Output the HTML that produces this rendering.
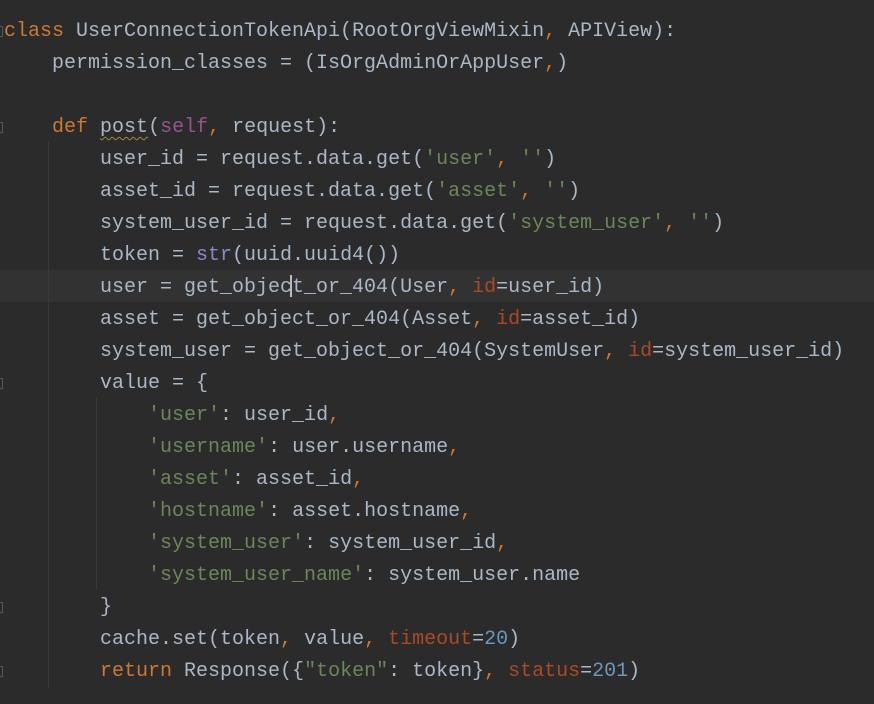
<!DOCTYPE html>
<html><head><style>
html,body{margin:0;padding:0;background:#2b2b2b;width:874px;height:704px;overflow:hidden}
.code{position:absolute;left:4px;top:16px;font-family:"Liberation Mono",monospace;font-size:20px;line-height:32px;color:#a9b7c6;white-space:pre}
.k{color:#cc7832}.s{color:#6a8759}.f{color:#94558d}.p{color:#aa4926}.n{color:#6897bb}.b{color:#8888c6}
.cur{position:absolute;left:0;top:270px;width:874px;height:32px;background:#323232}
.g{position:absolute;width:1px;background:#393939}
.fold{position:absolute;left:0;width:2px;height:9px;border:1px solid #555;border-left:none}
.caret{position:absolute;left:290px;top:275px;width:2px;height:22px;background:#bbb}
.u{text-decoration:underline wavy #a08a3a;text-decoration-thickness:1px;text-underline-offset:4px}
</style></head><body>
<div class="cur"></div>
<div class="g" style="left:48px;top:142px;height:546px"></div>
<div class="g" style="left:96px;top:398px;height:192px"></div>
<div class="fold" style="top:26px"></div>
<div class="fold" style="top:122px"></div>
<div class="fold" style="top:378px"></div>
<div class="fold" style="top:602px"></div>
<div class="fold" style="top:666px"></div>
<div class="code"><span class="k">class</span> UserConnectionTokenApi(RootOrgViewMixin<span class="k">,</span> APIView):
    permission_classes = (IsOrgAdminOrAppUser<span class="k">,</span>)

    <span class="k">def</span> <span class="u">post</span>(<span class="f">self</span><span class="k">,</span> request):
        user_id = request.data.get(<span class="s">'user'</span><span class="k">,</span> <span class="s">''</span>)
        asset_id = request.data.get(<span class="s">'asset'</span><span class="k">,</span> <span class="s">''</span>)
        system_user_id = request.data.get(<span class="s">'system_user'</span><span class="k">,</span> <span class="s">''</span>)
        token = <span class="b">str</span>(uuid.uuid4())
        user = get_object_or_404(User<span class="k">,</span> <span class="p">id</span>=user_id)
        asset = get_object_or_404(Asset<span class="k">,</span> <span class="p">id</span>=asset_id)
        system_user = get_object_or_404(SystemUser<span class="k">,</span> <span class="p">id</span>=system_user_id)
        value = {
            <span class="s">'user'</span>: user_id<span class="k">,</span>
            <span class="s">'username'</span>: user.username<span class="k">,</span>
            <span class="s">'asset'</span>: asset_id<span class="k">,</span>
            <span class="s">'hostname'</span>: asset.hostname<span class="k">,</span>
            <span class="s">'system_user'</span>: system_user_id<span class="k">,</span>
            <span class="s">'system_user_name'</span>: system_user.name
        }
        cache.set(token<span class="k">,</span> value<span class="k">,</span> <span class="p">timeout</span>=<span class="n">20</span>)
        <span class="k">return</span> Response({<span class="s">"token"</span>: token}<span class="k">,</span> <span class="p">status</span>=<span class="n">201</span>)</div>
<div class="caret"></div>
</body></html>
